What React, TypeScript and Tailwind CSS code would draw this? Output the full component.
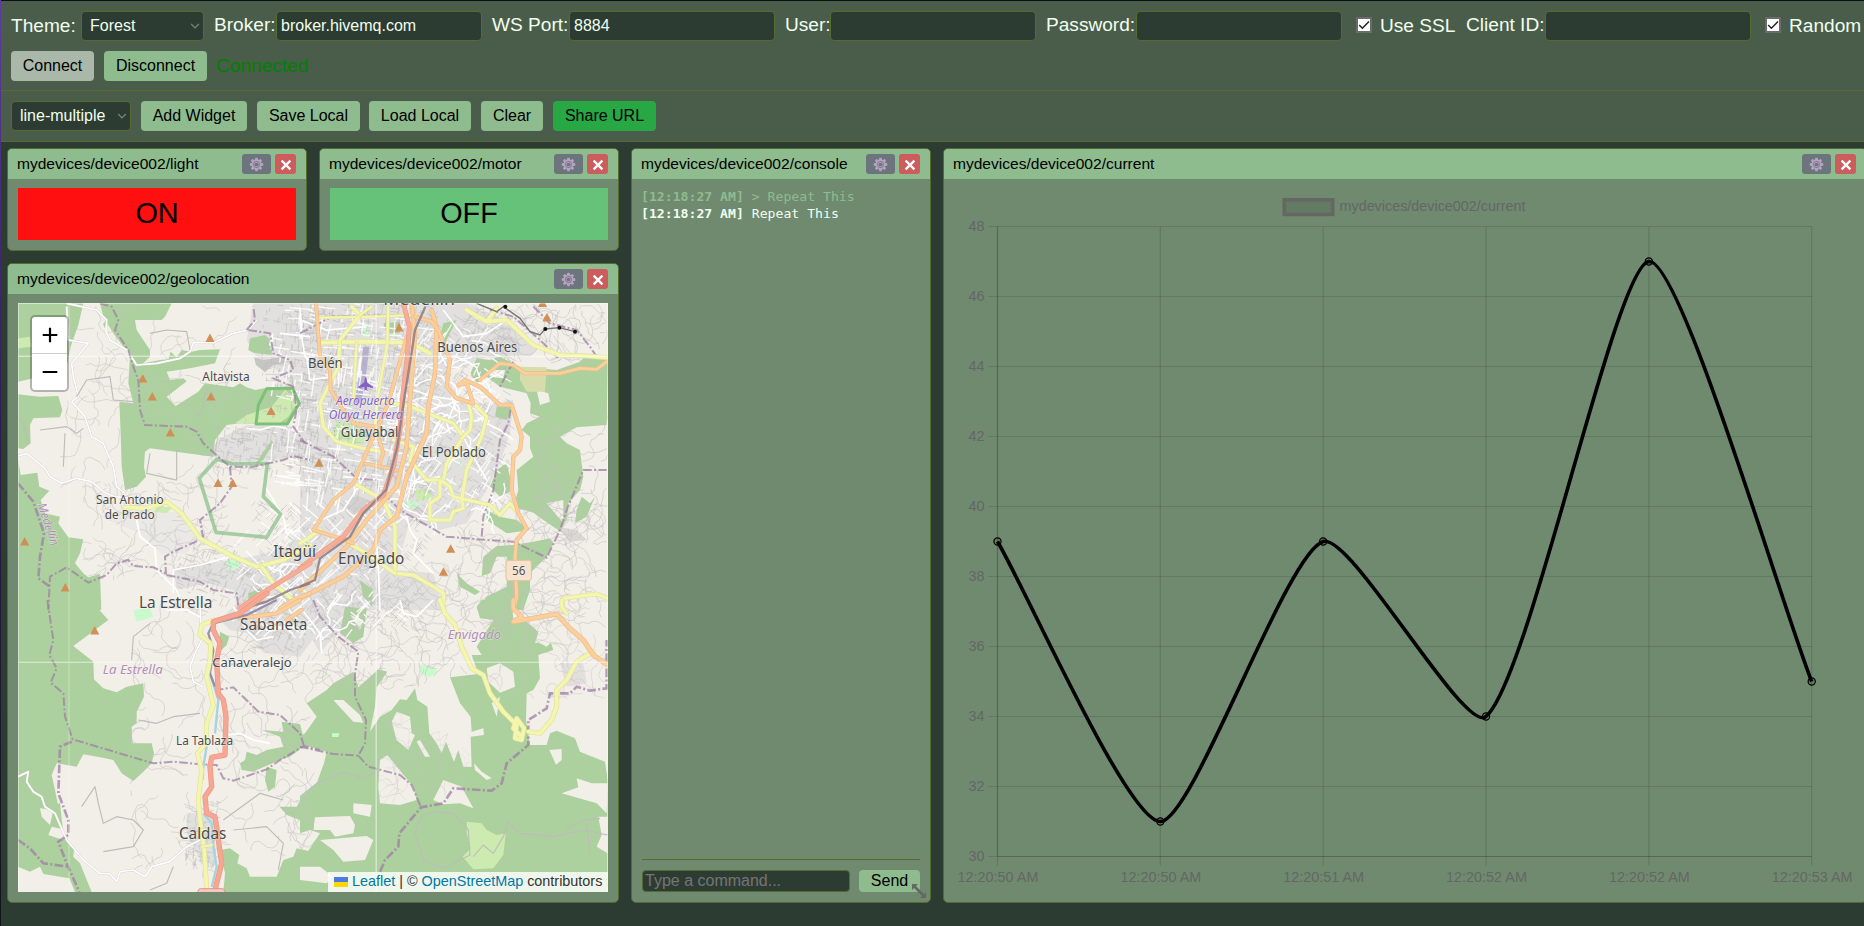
import React from "react";

/* ---------- shared bits ---------- */

const Gear = () => (
  <svg viewBox="0 0 16 16" className="h-[15px] w-[15px]">
    {[0, 45, 90, 135].map((a) => (
      <rect key={a} x="6.4" y="0.7" width="3.2" height="14.6" rx="1.2" fill="#b3a3be" transform={`rotate(${a} 8 8)`} />
    ))}
    <circle cx="8" cy="8" r="5.3" fill="#b3a3be" />
    <circle cx="8" cy="8" r="3.1" fill="none" stroke="#857b93" strokeWidth="1.1" />
    <circle cx="8" cy="8" r="1.9" fill="#6c757d" />
  </svg>
);

const Panel = ({ title, children, className = "" }: { title: string; children: React.ReactNode; className?: string }) => (
  <section className={`flex shrink-0 flex-col overflow-hidden rounded-[5px] border border-[#556b2f] bg-[#6f8a6f] ${className}`}>
    <header className="flex h-[30px] shrink-0 items-center bg-[#8fbc8f] pl-[9px] pr-[10px] text-[15.55px] text-black">
      <span className="min-w-0 flex-1 whitespace-nowrap pb-px leading-[28px]">{title}</span>
      <span className="flex h-[20px] w-[29px] items-center justify-center rounded-[3px] bg-[#6c757d]">
        <Gear />
      </span>
      <span className="ml-1 flex h-[20px] w-[21px] items-center justify-center rounded-[3px] bg-[#cd5c5c]">
        <svg viewBox="0 0 12 12" className="mt-[1px] h-[12px] w-[12px]">
          <path d="M1.6 1.6L10.4 10.4M10.4 1.6L1.6 10.4" stroke="#fff" strokeWidth="2.3" />
        </svg>
      </span>
    </header>
    <div className="flex min-h-0 flex-1 flex-col px-[10px] pb-[10px] pt-[9px]">{children}</div>
  </section>
);

const Field = ({ label, value = "", w }: { label: string; value?: string; w: string }) => (
  <div className="mr-[10px] flex shrink-0 items-center">
    <span className={`shrink-0 whitespace-nowrap leading-[28px] -mt-[2px] ${w}`}>{label}</span>
    <span className="flex h-[30px] w-[206px] items-center rounded-[4px] border border-[#556b2f] bg-[#2d3c32] px-[4px] text-[16px] text-[#f0fff0]">
      {value}
    </span>
  </div>
);

const Check = ({ label, className = "" }: { label: string; className?: string }) => (
  <div className={`flex shrink-0 items-center ${className}`}>
    <span className="flex h-[16px] w-[16px] shrink-0 items-center justify-center border-2 border-[#6b6b6b] bg-white -mt-[2px]">
      <svg viewBox="0 0 12 12" className="h-[12px] w-[12px]">
        <path d="M1.2 6L4.4 9.2L11 2.4" fill="none" stroke="#222" strokeWidth="1.5" />
      </svg>
    </span>
    <span className="ml-[8px] whitespace-nowrap leading-[30px]">{label}</span>
  </div>
);

const Select = ({ value, className }: { value: string; className: string }) => (
  <div className={`flex h-[30px] shrink-0 items-center justify-between rounded-[4px] border border-[#556b2f] bg-[#2d3c32] pl-[8px] pr-[3px] text-[16px] text-[#f0fff0] ${className}`}>
    <span>{value}</span>
    <svg viewBox="0 0 10 10" className="h-[10px] w-[10px]">
      <path d="M1.2 3L5 7L8.8 3" fill="none" stroke="#7a857c" strokeWidth="1.2" />
    </svg>
  </div>
);

const Btn = ({ label, className }: { label: string; className: string }) => (
  <button className={`flex h-[30px] shrink-0 items-center justify-center rounded-[4px] pb-[1px] text-[16px] text-black ${className}`}>{label}</button>
);

/* ---------- map ---------- */

const rng = (seed: number) => {
  let s = seed;
  return () => {
    s = (s * 1664525 + 1013904223) % 4294967296;
    return s / 4294967296;
  };
};

// Winding minor roads inside a rectangle
const wander = (seed: number, n: number, x: number, y: number, w: number, h: number, len = 9, step = 5) => {
  const r = rng(seed);
  let d = "";
  for (let i = 0; i < n; i++) {
    let px = x + r() * w;
    let py = y + r() * h;
    let a = r() * 6.28;
    d += `M${px.toFixed(1)} ${py.toFixed(1)}`;
    for (let k = 0; k < len; k++) {
      a += (r() - 0.5) * 1.9;
      px += Math.cos(a) * step;
      py += Math.sin(a) * step;
      if (px < x || px > x + w || py < y || py > y + h) break;
      d += `L${px.toFixed(1)} ${py.toFixed(1)}`;
    }
  }
  return d;
};

// Short perpendicular street segments
const grid = (seed: number, n: number, x: number, y: number, w: number, h: number, tilt: number, max = 16) => {
  const r = rng(seed);
  let d = "";
  for (let i = 0; i < n; i++) {
    const px = x + r() * w;
    const py = y + r() * h;
    const a = tilt + (r() > 0.5 ? Math.PI / 2 : 0) + (r() - 0.5) * 0.25;
    const l = 3 + r() * max;
    d += `M${px.toFixed(1)} ${py.toFixed(1)}l${(Math.cos(a) * l).toFixed(1)} ${(Math.sin(a) * l).toFixed(1)}`;
  }
  return d;
};

const Q1 = "translate(0 300) scale(0.33333)";
const Q2 = "translate(300 290) scale(0.33333)";
const Q3 = "translate(0 600) scale(0.33333)";
const Q4 = "translate(300 600) scale(0.33333)";

const Road = ({ d, c, k, w = 11 }: { d: string; c: string; k: string; w?: number }) => (
  <g fill="none" strokeLinejoin="round" strokeLinecap="round">
    <path d={d} stroke={k} strokeWidth={w + 2} />
    <path d={d} stroke={c} strokeWidth={w - 2} />
  </g>
);

const Orange = ({ d, w = 11 }: { d: string; w?: number }) => <Road d={d} c="#fbcf9c" k="#eebb88" w={w} />;
const Yellow = ({ d, w = 11 }: { d: string; w?: number }) => <Road d={d} c="#f4f6ae" k="#e0e2a0" w={w} />;

const Label = ({ x, y, w, s, children, fill = "#4a4a4a", italic = false }: { x: number; y: number; w: number; s: number; children: string; fill?: string; italic?: boolean }) => (
  <text x={x} y={y} textLength={w} lengthAdjust="spacingAndGlyphs" fontSize={s * 1.07} fill={fill} stroke="#ffffff" strokeOpacity="0.65" strokeWidth="2.4" paintOrder="stroke" fontStyle={italic ? "italic" : "normal"} className="font-['Noto_Sans',sans-serif]">
    {children}
  </text>
);

const peaks: [number, number][] = [
  [210, 338], [142.7, 378.5], [152.3, 396.5], [211, 396.5], [271, 411], [170.3, 432.5], [218, 483], [232.7, 483], [24.7, 541.5], [65.3, 587.5], [94.7, 630.5],
  [399, 327.5], [547, 317.5], [542.5, 303], [319, 462.7], [450.7, 548.7], [443.5, 571.7],
];

const CityMap = () => (
  <svg viewBox="18 303 590 589" className="block h-full w-full">
    <rect x="18" y="303" width="590" height="589" fill="#f2efe9" />

    {/* built-up areas */}
    <g fill="#e1e0de">
      <path transform={Q1} d="M760 10L930 10L930 430L890 380L905 310L870 250L820 200L780 190L740 120Z M650 420L740 375L900 380L930 470L700 490L640 470Z M800 760L930 700L930 930L720 930L700 870L620 850L530 870L520 810L600 790L700 780Z" />
      <path transform={Q1} d="M300 650L380 620L540 640L600 700L560 760L480 760L420 700Z" opacity=".4" />
      <path transform={Q2} d="M0 40L500 40L600 90L720 170L690 200L640 200L560 200L500 230L440 240L460 300L520 340L640 330L630 430L600 520L560 600L500 700L420 720L330 690L290 840L400 850L430 960L0 960Z" />
      <path transform={Q3} d="M720 0L960 0L960 90L900 170L800 160L740 100L690 90L660 60Z M560 640L640 640L650 800L600 780L560 700Z" />
      <path transform={Q4} d="M550 10L620 0L640 40L590 60L545 50Z M0 0L190 0L60 160L20 90Z M780 190L850 190L860 250L800 260Z" />
    </g>

    {/* woodland */}
    <g fill="#add19e">
      <path transform={Q1} d="M54 10L250 10L235 75L212 140L200 200L150 215L100 235L54 245Z M54 283L120 290L175 288L187 330L180 352L100 355L90 375L92 430L70 447L54 445Z M300 10L515 10L495 50L485 60L405 60L410 90L450 150L450 170L430 190L480 180L505 178L512 155L530 172L545 150L575 155L600 150L660 148L645 190L570 205L500 215L510 240L550 235L560 244L500 290L527 318L595 275L615 250L700 262L720 250L740 262L765 270L810 262L880 265L897 310L860 375L765 372L720 370L680 375L645 420L640 470L560 460L450 445L435 455L432 500L438 530L410 560L375 570L365 500L362 400L358 305L400 310L385 250L388 200L390 165L370 140L340 100L310 50Z M750 115L795 105L817 125L815 165L760 158L745 150Z M54 478L62 525L112 518L118 560L148 572L122 600L135 640L180 650L175 670L205 712L250 718L240 760L225 790L250 820L265 832L300 822L304 930L54 930Z M815 420L820 430L790 480L765 495L780 470Z M300 85L318 60L320 90Z M745 880L790 860L780 905L745 900Z" />
      <path transform={Q2} d="M925 200L860 195L840 215L770 240L660 230L600 200L570 210L530 205L512 250L530 280L560 260L600 290L640 300L680 310L692 340L690 370L720 380L680 400L665 420L690 440L690 475L700 500L650 540L655 600L640 650L700 668L730 690L780 724L800 690L805 640L840 600L850 560L840 480L800 460L780 440L830 412L920 405Z M885 620L860 680L825 700L830 660L845 620L870 640Z M430 100L470 90L450 130L430 170L420 140Z M250 100L300 95L300 130L260 130Z M590 350L640 350L620 390L585 380Z M590 540L620 520L640 600L600 620L570 590Z M470 850L500 880L540 905L525 915L480 890Z M640 765L700 755L750 745L760 760L740 800L690 850L690 900L670 960L530 960L560 920L620 890L620 800L590 800L570 850L545 858L550 800L590 768Z M180 870L220 900L215 950L190 920Z M560 660L600 680L650 690L690 720L620 730L560 690Z M740 640L790 630L790 700Z" />
      <path transform={Q3} d="M54 0L304 0L298 30L325 60L220 138L280 185L282 238L310 265L350 277L380 260L430 250L432 290L410 335L410 370L395 380L397 430L430 430L455 430L462 460L455 490L430 515L400 543L365 520L340 480L300 472L250 463L230 500L170 490L155 525L165 570L175 620L185 700L200 720L222 745L220 770L240 790L275 876L225 876L208 835L130 822L120 800L90 815L54 800Z M660 750L690 745L718 765L712 790L740 805L750 830L830 830L850 780L880 770L890 745L935 755L960 740L960 876L670 876L675 820Z M740 455L770 465L800 450L850 440L840 410L785 390L850 395L845 365L900 372L910 410L960 375L960 460L910 440L870 470L840 480L760 515L725 510L720 490L735 480Z M800 500L830 510L825 560L805 575L795 540Z M840 620L890 620L905 595L945 575L920 545L950 515L960 510L960 640L900 660L860 645Z M660 95L688 110L680 135L655 160Z M130 620L180 610L190 700L160 680Z" />
      <path transform={Q4} d="M0 410L15 400L50 350L20 310L80 270L100 250L160 215L175 262L235 208L262 215L230 262L225 320L210 395L240 350L275 330L300 298L320 300L345 265L352 300L382 320L388 400L410 430L425 460L438 425L462 485L475 450L490 500L515 500L512 410L552 405L550 385L515 395L512 350L480 310L450 232L535 222L515 165L545 165L530 140L580 60L540 55L530 20L545 0L635 0L640 60L680 65L715 95L705 130L750 120L760 150L715 165L720 235L700 270L680 280L678 360L690 435L740 435L750 400L770 392L825 415L840 455L915 485L923 540L923 876L0 876L0 790L60 700L30 690L0 700Z M135 20L200 25L190 110L160 130L120 100Z" />
    </g>

    {/* clearings */}
    <g fill="#f2efe9">
      <path transform={Q1} d="M250 30L300 50L330 120L380 165L385 220L340 260L230 300L215 200L235 120Z" />
      <path transform={Q2} d="M710 300L745 310L750 335L720 345Z M560 240L615 240L610 265L570 260Z" />
      <path transform={Q3} d="M120 625L160 630L150 675L125 650Z M155 680L200 690L190 720L145 705Z" />
      <path transform={Q4} d="M290 335L330 350L335 400L345 405L325 450L290 420L275 365Z M350 425L360 420L390 470L375 470Z M400 600L415 570L430 540L485 560L520 625L480 610L430 613Z M522 490L545 515L575 535L560 540L525 510Z M785 580L835 562L830 535L875 550L923 550L920 640L890 610Z M748 450L785 447L785 480L768 494Z M45 652L150 648L165 675L160 700L105 710L90 690L40 690Z M60 720L200 708L220 720L195 780L130 785L100 750Z M890 740L905 705L895 650L923 650L923 760Z M560 205L600 190L640 215L645 260L600 278L565 245Z M0 440L30 440L80 455L72 490L50 550L0 592Z M100 300L130 300L180 345L190 368L160 365Z M240 480L262 465L340 560L350 600L300 615L240 610L235 560Z M160 610L215 615L210 650L160 640Z M575 310L600 290L590 350Z M690 290L735 320L725 345L690 355Z M0 800L60 800L100 830L80 850L0 840Z M720 110L760 120L740 140L712 125Z M150 45L190 60L180 90Z" />
    </g>
    <g fill="#cdebb0">
      <path transform={Q1} d="M54 115L90 110L95 140L54 145Z M815 320L855 270L895 300L865 350L830 375L780 372L705 370L740 345Z" />
      <path transform={Q4} d="M500 665L545 670L560 690L590 705L617 700L610 765L580 805L520 808L488 770L512 745L500 700Z" />
      <path transform={Q2} d="M110 395L160 400L200 430L190 460L130 465L100 430Z M340 600L390 595L400 630L350 630Z" />
      <path transform={Q1} d="M470 620L520 620L500 640L460 635Z" />
    </g>
    <g fill="#c8facc">
      <path transform={Q4} d="M358 195L400 200L412 215L390 232L360 220Z M95 400L118 400L115 411L97 411Z" />
      <path transform={Q3} d="M400 30L450 25L460 50L410 65Z" />
      <path transform={Q1} d="M675 780L710 775L720 800L690 815Z" />
      <path transform={Q2} d="M315 630L360 640L350 655L320 650Z M470 515L490 520L480 530Z M188 110L205 115L205 140L188 140Z" />
    </g>
    <path transform={Q2} d="M660 230L740 232L735 305L680 305L660 270Z" fill="#d6dcac" />
    <g fill="#c6c5c3">
      <path transform={Q1} d="M762 172L790 180L850 170L858 190L820 195L795 217L768 195Z" />
      <path transform={Q2} d="M155 610L230 640L180 690L140 650Z M770 710L830 720L860 750L810 755Z" opacity=".55" />
      <path transform={Q2} d="M190 170L208 170L200 240L185 330L170 350L165 330L180 240Z" fill="#b5b0d2" />
    </g>

    {/* minor streets */}
    <g fill="none" strokeLinejoin="round">
      <g stroke="#c3c1c0" strokeWidth="0.7">
        <path d={wander(11, 60, 60, 305, 190, 185)} opacity=".75" />
        <path d={wander(12, 80, 80, 480, 150, 100)} opacity=".75" />
        <path d={wander(13, 55, 130, 600, 80, 270)} opacity=".8" />
        <path d={wander(14, 65, 215, 620, 100, 240)} opacity=".8" />
        <path d={wander(15, 110, 310, 560, 160, 130)} opacity=".8" />
        <path d={wander(16, 90, 455, 500, 153, 130)} opacity=".8" />
        <path d={wander(17, 45, 530, 400, 78, 150)} opacity=".8" />
        <path d={wander(18, 60, 480, 600, 128, 100)} opacity=".6" />
        <path d={wander(19, 25, 375, 730, 100, 60)} opacity=".25" />
        <path d={wander(20, 70, 460, 303, 148, 60)} opacity=".8" />
        <path d={wander(21, 40, 370, 710, 80, 100)} opacity=".4" />
      </g>
      <g stroke="#bcbbbb" strokeWidth="0.8">
        <path d={grid(31, 900, 300, 303, 130, 190, 0.15, 8)} opacity=".7" />
        <path d={grid(32, 500, 400, 310, 110, 200, 0.6, 8)} opacity=".7" />
        <path d={grid(33, 500, 255, 500, 170, 130, 0.75, 8)} opacity=".7" />
        <path d={grid(34, 200, 215, 425, 95, 45, 0.2, 6)} opacity=".7" />
        <path d={grid(35, 200, 240, 560, 60, 90, 0.5, 7)} opacity=".7" />
        <path d={grid(36, 120, 175, 540, 70, 70, 0.4, 7)} opacity=".7" />
        <path d={grid(37, 170, 262, 305, 48, 110, 0.1, 7)} opacity=".7" />
        <path d={grid(38, 110, 185, 800, 35, 70, 0.2, 6)} opacity=".6" />
      </g>
      <g stroke="#ffffff" strokeWidth="1.4">
        <path d={grid(41, 240, 270, 303, 150, 190, 0.15, 22)} opacity=".85" />
        <path d={grid(42, 110, 410, 315, 90, 190, 0.55, 20)} opacity=".8" />
        <path d={grid(43, 130, 240, 500, 160, 130, 0.75, 22)} opacity=".85" />
        <path d={wander(44, 24, 385, 330, 120, 210, 12, 6)} />
        <path d={wander(45, 16, 250, 560, 110, 80, 10, 6)} />
      </g>
      <g stroke="#cfcccb" strokeWidth="7">
        <path transform={Q1} d="M54 468L80 460L110 485L135 505L150 530L185 550L230 535L275 545L310 575L345 590L395 595M200 10L245 20L290 30L320 60L318 95L330 120L380 150L410 195L470 190L540 175L570 155L580 128L640 128L700 100L745 90L770 60M200 20L205 120L265 130L215 190L220 230L235 290L215 305L255 350L275 410L310 430L340 500L350 560L375 580" />
        <path transform={Q3} d="M54 530L85 515L80 545L100 575L125 590L135 620L165 640L200 720L250 780L300 820L330 822L350 845L360 815L400 810L435 830L455 800L510 785L560 740L600 720M600 20L605 120L585 160L570 200L580 245L610 260" />
      </g>
      <g stroke="#ffffff" strokeWidth="5">
        <path transform={Q1} d="M54 468L80 460L110 485L135 505L150 530L185 550L230 535L275 545L310 575L345 590L395 595M200 10L245 20L290 30L320 60L318 95L330 120L380 150L410 195L470 190L540 175L570 155L580 128L640 128L700 100L745 90L770 60M200 20L205 120L265 130L215 190L220 230L235 290L215 305L255 350L275 410L310 430L340 500L350 560L375 580M410 660L420 710L465 745L470 810L530 870L540 900M740 385L780 390L820 378L860 385M795 560L820 600L850 650L860 700L900 690M520 880L520 810L600 795L690 770M900 20L905 110L915 170L930 180M840 100L930 110" />
        <path transform={Q3} d="M54 530L85 515L80 545L100 575L125 590L135 620L165 640L200 720L250 780L300 820L330 822L350 845L360 815L400 810L435 830L455 800L510 785L560 740L600 720M600 20L605 120L585 160L570 200L580 245L610 260M700 20L740 90L770 120L820 110M500 30L560 30L600 50M680 405L720 400L760 420L810 430" />
        <path transform={Q2} d="M0 90L80 120L200 110M20 200L30 270L100 260M340 300L400 320L470 330L440 400L450 430M480 420L520 500L560 570M370 550L340 580L420 560M320 680L330 720L350 750L340 790L380 830L400 850M200 550L130 660L40 700M230 760L235 830L240 960M130 560L250 570M560 400L600 420L640 450M430 60L490 140L560 130L620 90" />
        <path transform={Q4} d="M300 0L310 40L350 50L380 20L400 0M0 20L60 100L65 160" />
      </g>
      <g stroke="#bdbcba" strokeWidth="3.4">
        <path transform={Q1} d="M450 100L500 90L560 95L570 150M120 390L200 380L230 400L250 385M190 500L195 400M450 460L440 520L530 540L530 450M230 290L260 240L330 230L340 300L400 305M54 355L70 370L85 430M620 265L605 340L585 348" />
        <path transform={Q3} d="M245 620L285 560L295 610L310 670L350 650L400 660L430 690L400 740L310 755M395 180L400 110L450 70M415 360L470 370L520 350L600 340M670 660L780 580L850 600M700 690L800 680L850 730L835 810M450 870L500 850L520 800" />
        <path transform={Q4} d="M0 590L50 550L130 517L190 535L235 510M365 640L345 700L370 780L430 805L510 765L505 690L460 640L400 635L365 650M520 770L550 735L580 760L610 710L625 665L660 700L760 710L850 690L923 705M795 690L850 660L900 655M860 670L870 760" />
      </g>
    </g>

    {/* protected area outlines */}
    <g fill="none" stroke="#8cc08a" strokeLinejoin="round">
      <path transform={Q1} d="M650 478L700 492L802 490L790 590L842 642L800 712L648 697L598 535Z" strokeWidth="11" opacity=".75" />
      <path transform={Q1} d="M768 372L775 315L800 266L878 264L898 310L862 372Z" strokeWidth="9" stroke="#7fbf7a" />
      <path transform={Q2} d="M105 460L103 415L130 385L190 400" strokeWidth="3" strokeDasharray="5 6" />
    </g>

    {/* administrative boundaries */}
    <g fill="none" stroke="#9f7fa3" strokeOpacity=".75" strokeWidth="6" strokeDasharray="26 7 6 7">
      <path transform={Q1} d="M300 10L335 20L355 60L345 90L385 150L400 200L415 240L420 330L435 375L560 380L590 395L610 430L660 475L690 500L760 500L850 480L880 468L930 480M690 500L695 560L660 610L600 660L610 715L520 755L495 770L498 820L460 802L400 798L385 780L350 790L320 825L265 848L200 802L150 830L145 930M500 825L600 845L640 870L710 880L715 920M740 90L765 60L760 20M745 90L810 100L820 160L870 180L880 210L820 235L880 260L890 330L880 380L915 430" />
      <path transform={Q1} d="M54 550L100 605L132 700L120 770L115 835L150 860" strokeWidth="8" />
      <path transform={Q3} d="M142 0L160 120L148 165L170 205L152 248L190 280L195 350L218 418L460 490L520 485L600 493L650 495L670 535L700 542L800 508L840 480L912 438L960 450M912 438L900 400L840 345L775 335L700 262L650 270" />
      <path transform={Q3} d="M215 425L180 440L175 580L205 660L205 705L175 725L200 790L238 876M54 720L90 745L130 790L205 800" strokeWidth="8" />
      <path transform={Q4} d="M0 440L100 462L175 467L195 430L198 360L165 290L165 220L175 155L115 110L60 50L40 0M175 467L205 500L300 525L335 555L363 622" />
      <path transform={Q4} d="M240 815L255 780L295 740L298 700L363 622L430 610L460 565L575 572L605 550L620 490L685 435L685 360L740 325L750 280L810 280L830 260L870 272L920 265L920 120" strokeWidth="8" />
      <path transform={Q2} d="M0 450L30 465L100 500L170 565L230 570M250 610L300 660L440 740L560 750L640 755L740 803L780 720L800 660L850 540L920 540M545 740L550 680L580 600L600 450L625 400L635 340M570 60L640 80L720 150L780 210M640 215L600 290M700 50L750 100L830 120L870 170L890 200M0 130L100 78L330 75" />
    </g>

    {/* rivers */}
    <g transform={Q3} fill="none" stroke="#a6d4dc" strokeWidth="7">
      <path d="M630 220L655 300L645 400M620 440L610 500L608 540M610 640L635 670L640 740L650 800L635 860" />
    </g>

    {/* main roads */}
    <g transform={Q2}>
      <Yellow d="M55 83L210 80L350 75" w={8} />
      <Yellow d="M60 158L190 155L330 158L390 190" w={13} />
      <Yellow d="M155 50L180 75L120 150L115 230L60 340L70 410L110 455L190 475L250 485" />
      <Yellow d="M265 50L262 160L235 310L225 400" w={9} />
      <Yellow d="M180 75L215 50M170 150L160 330" w={8} />
      <Yellow d="M230 330L330 350L460 400L490 440L440 520L430 570L380 570L330 510L340 470L280 450" />
      <Yellow d="M505 340L515 380L510 420L485 445M525 345L560 380L545 440L500 540L485 630L490 655L460 665L450 690L390 690L390 640L420 620L420 570L450 590L460 620L570 645L600 675L630 640L650 665" />
      <Yellow d="M500 60L560 95L620 90L700 165L780 195L860 198L923 203M560 95L590 55" w={13} />
      <Yellow d="M170 585L250 630L285 710L285 850L340 855L400 890L430 910L432 960M60 720L0 760" w={12} />
      <Yellow d="M120 745L200 790L285 850" w={12} />
      <Yellow d="M923 925L890 912L790 925L785 960" w={12} />
      <Orange d="M48 40L60 200L90 240L92 300L130 360L160 400L225 410L250 490L235 530" w={10} />
      <Orange d="M395 60L410 110L405 250L385 350L380 430L320 560L290 680L240 720L220 780L130 860L0 925" w={12} />
      <Orange d="M335 40L345 130L330 330L320 470L290 590L200 690L140 770L0 900" w={12} />
      <Orange d="M320 140L290 250L265 340L220 440L160 580L100 630L40 720L120 745L160 760" w={10} />
      <Orange d="M345 80L395 95L415 120L450 210L440 290L470 325L520 340L500 280L475 285L495 270L540 290L600 345L635 345L665 440L660 480L640 500L635 600L655 670L680 715L650 750L645 800L650 920L640 960" w={11} />
      <Orange d="M540 270L600 220L640 225L675 250L780 250L840 235L890 238L920 215" w={10} />
      <Orange d="M195 520L290 540" w={9} />
      <Road d="M310 40L328 110L322 200L310 300L300 420L280 530L250 615L190 660L130 740L60 790L0 835" c="#f6ad98" k="#ee9c86" w={13} />
      <path d="M376 50L345 120L333 200L312 330L292 470L258 600L190 670L150 740L60 805L45 870L0 890" fill="none" stroke="#8b7d84" strokeWidth="7" opacity=".85" />
      <path d="M530 40L590 65L610 50L660 85L690 125L720 135L735 117L778 113L825 125" fill="none" stroke="#777" strokeWidth="4" />
      {[[616, 50], [736, 117], [778, 113], [825, 125]].map(([x, y]) => (
        <circle key={x} cx={x} cy={y} r="6" fill="#111" />
      ))}
    </g>
    <g transform={Q1}>
      <Yellow d="M375 622L440 625L500 605L545 640L600 715L700 770L770 800L850 780L930 735" w={13} />
      <Yellow d="M785 800L820 850L880 900" w={12} />
      <Road d="M930 790L850 840L770 890L720 925" c="#f6ad98" k="#ee9c86" w={13} />
      <path d="M930 850L870 870L800 905L740 922" fill="none" stroke="#8b7d84" strokeWidth="7" opacity=".85" />
      <Orange d="M930 880L880 900L840 925" />
    </g>
    <g transform={Q3}>
      <Orange d="M720 55L830 40L900 0M860 60L905 30" />
      <path d="M830 0L740 45L640 70L625 100L640 150L630 220L645 260" fill="none" stroke="#8b83a0" strokeWidth="7" opacity=".85" />
      <Yellow d="M640 60L605 75L600 105L632 130L630 180L620 230L640 315L620 370L618 430L592 460L605 510L595 600L600 660L612 740L620 865" w={13} />
      <Yellow d="M600 690L630 690M605 740L635 735" w={8} />
      <Road d="M800 -20L720 40L640 65L640 90L660 130L650 180L655 280L670 300L678 350L675 465L635 472L630 500L635 560L615 590L620 640L645 650L655 720L665 790L645 870" c="#f6a794" k="#ee9681" w={14} />
      <rect x="594" y="866" width="80" height="30" rx="8" fill="#f6c9c2" stroke="#e0968b" strokeWidth="3" />
    </g>
    <g transform={Q4}>
      <Yellow d="M420 0L435 40L465 75L485 140L515 205L550 225L570 280L610 335L650 375L645 415L665 420L672 385L650 355L640 385L665 410M685 395L720 400L755 360L770 320L770 270L800 240L830 185L880 155" w={13} />
      <Yellow d="M785 0L785 20L800 40" w={11} />
      <Orange d="M640 0L640 25L665 50L640 65L700 55L770 42L810 85L850 120L880 165L923 195" w={13} />
    </g>

    {/* summits */}
    {peaks.map(([x, y]) => (
      <path key={`${x}-${y}`} d={`M${x} ${y - 4.4}L${x + 4.6} ${y + 4}H${x - 4.6}Z`} fill="#d08f55" />
    ))}
    <path transform={Q2} d="M197 260Q202 266 201 277L219 290V295L201 290L200 298L205 303L197 300L189 303L194 298L193 290L175 295V290L193 277Q192 266 197 260Z" fill="#8461c4" />
    <g transform={Q2}>
      <rect x="618" y="811" width="76" height="61" rx="8" fill="#f6e2cd" stroke="#e5c19a" strokeWidth="3" />
      <Label x={636} y={855} w={40} s={34}>56</Label>
    </g>

    {/* tile seams */}
    <g fill="#ffffff" opacity=".5">
      <rect x="18" y="355.6" width="590" height="1.4" />
      <rect x="18" y="661.7" width="590" height="1.2" />
      <rect x="375.5" y="303" width="1.4" height="589" />
      <rect x="68.5" y="303" width="1" height="589" opacity=".7" />
      <rect x="18" y="303" width="590" height="0.8" />
      <rect x="18" y="303" width="0.8" height="589" />
      <rect x="607.2" y="303" width="0.8" height="589" />
    </g>

    {/* place names */}
    <g transform={Q2}>
      <Label x={250} y={46} w={215} s={48}>Medellín</Label>
      <Label x={24} y={233} w={104} s={38}>Belén</Label>
      <Label x={412} y={187} w={240} s={38}>Buenos Aires</Label>
      <Label x={108} y={344} w={176} s={36} fill="#8461c4" italic>Aeropuerto</Label>
      <Label x={86} y={386} w={222} s={36} fill="#8461c4" italic>Olaya Herrera</Label>
      <Label x={122} y={442} w={173} s={38}>Guayabal</Label>
      <Label x={365} y={500} w={193} s={38}>El Poblado</Label>
      <Label x={114} y={823} w={199} s={44}>Envigado</Label>
    </g>
    <g transform={Q1}>
      <Label x={607} y={242} w={142} s={35}>Altavista</Label>
      <Label x={288} y={611} w={203} s={34}>San Antonio</Label>
      <Label x={314} y={657} w={150} s={34}>de Prado</Label>
      <Label x={820} y={770} w={128} s={44}>Itagüí</Label>
      <Label x={417} y={924} w={220} s={44}>La Estrella</Label>
      <g transform="rotate(72 118 612)">
        <Label x={118} y={618} w={132} s={34} fill="#b08db5" italic>Medellín</Label>
      </g>
    </g>
    <g transform={Q3}>
      <Label x={720} y={90} w={202} s={44}>Sabaneta</Label>
      <Label x={637} y={201} w={238} s={37}>Cañaveralejo</Label>
      <Label x={308} y={222} w={180} s={36} fill="#b08db5" italic>La Estrella</Label>
      <Label x={528} y={436} w={171} s={34}>La Tablaza</Label>
      <Label x={537} y={718} w={142} s={44}>Caldas</Label>
    </g>
    <g transform={Q4}>
      <Label x={443} y={117} w={160} s={36} fill="#b08db5" italic>Envigado</Label>
    </g>
  </svg>
);

/* ---------- chart ---------- */

const values = [39, 31, 39, 34, 47, 35];
const times = ["12:20:50 AM", "12:20:50 AM", "12:20:51 AM", "12:20:52 AM", "12:20:52 AM", "12:20:53 AM"];
const X = (i: number) => 997.5 + i * 162.84;
const Y = (v: number) => 226.5 + (48 - v) * 35;

const TENSION = 0.2;

// Cardinal-style spline: control points follow the chord between both neighbours
const curve = () => {
  const pts = values.map((v, i) => [X(i), Y(v)]);
  const ctl = pts.map((p, i) => {
    const a = pts[Math.max(i - 1, 0)];
    const b = pts[Math.min(i + 1, pts.length - 1)];
    const d0 = Math.hypot(p[0] - a[0], p[1] - a[1]);
    const d1 = Math.hypot(b[0] - p[0], b[1] - p[1]);
    const f0 = (TENSION * d0) / (d0 + d1);
    const f1 = (TENSION * d1) / (d0 + d1);
    const vx = b[0] - a[0];
    const vy = b[1] - a[1];
    return [p[0] - f0 * vx, p[1] - f0 * vy, p[0] + f1 * vx, p[1] + f1 * vy];
  });
  let d = `M${pts[0][0]} ${pts[0][1]}`;
  for (let i = 0; i < pts.length - 1; i++) {
    d += `C${ctl[i][2]} ${ctl[i][3]} ${ctl[i + 1][0]} ${ctl[i + 1][1]} ${pts[i + 1][0]} ${pts[i + 1][1]}`;
  }
  return d;
};

const Chart = () => (
  <svg viewBox="954 188 902 704" className="block h-[704px] w-[902px] overflow-visible font-['Liberation_Sans',Arial,sans-serif]" fontSize="14.4" fill="#666666">
    <rect x="1284.3" y="199.8" width="48.4" height="14.6" fill="#000" fillOpacity=".1" stroke="#666" strokeWidth="3.6" />
    <text x="1339.5" y="211" textLength="186" lengthAdjust="spacingAndGlyphs">mydevices/device002/current</text>
    <g stroke="#000" strokeOpacity=".12" strokeWidth="1.2">
      {[48, 46, 44, 42, 40, 38, 36, 34, 32, 30].map((v) => (
        <line key={v} x1="988.4" x2={X(5)} y1={Y(v)} y2={Y(v)} />
      ))}
      {times.map((_, i) => (
        <line key={i} x1={X(i)} x2={X(i)} y1="226.5" y2="865.8" />
      ))}
      <path d={`M${X(0)} 226.5V856.5H${X(5)}`} fill="none" />
    </g>
    {[48, 46, 44, 42, 40, 38, 36, 34, 32, 30].map((v) => (
      <text key={v} x="984.5" y={Y(v) + 4} textAnchor="end">{v}</text>
    ))}
    {times.map((t, i) => (
      <text key={i} x={X(i) + 0.5} y="882.3" textAnchor="middle">{t}</text>
    ))}
    <path d={curve()} fill="none" stroke="#000" strokeWidth="3.6" />
    {values.map((v, i) => (
      <circle key={i} cx={X(i)} cy={Y(v)} r="3.6" fill="#000" fillOpacity=".1" stroke="#000" strokeWidth="1.2" />
    ))}
  </svg>
);

/* ---------- page ---------- */

export default function App() {
  return (
    <div className="flex h-[926px] w-[1864px] overflow-hidden bg-[#2d3c32] font-['Liberation_Sans',Arial,sans-serif] text-[19.1px] text-[#f0fff0]">
      <div className="w-px shrink-0 bg-linear-to-b from-[#5a3ea0] via-[#2a1a4a] to-[#101418]" />
      <div className="flex w-[1863px] flex-col overflow-hidden border-t border-[#0b0f14]">
        <div className="flex h-[90px] shrink-0 flex-col gap-[10px] border-b border-[#556b2f] bg-[#4a5d4b] px-[10px] pt-[10px]">
          <div className="flex h-[30px] items-center">
            <span className="w-[70px] shrink-0 leading-[30px]">Theme:</span>
            <Select value="Forest" className="mr-[10px] w-[123px]" />
            <Field label="Broker:" value="broker.hivemq.com" w="w-[62px]" />
            <Field label="WS Port:" value="8884" w="w-[77px]" />
            <Field label="User:" w="w-[45px]" />
            <Field label="Password:" w="w-[90px]" />
            <Check label="Use SSL" className="ml-[4px] w-[110px]" />
            <Field label="Client ID:" w="w-[79px]" />
            <Check label="Random" className="ml-[4px]" />
          </div>
          <div className="flex h-[30px] items-center gap-[10px]">
            <Btn label="Connect" className="w-[83px] bg-[#a9b8a9]" />
            <Btn label="Disconnect" className="w-[103px] bg-[#8fbc8f]" />
            <span className="-ml-px leading-[30px] text-[#008000]">Connected</span>
          </div>
        </div>
        <div className="flex h-[51px] shrink-0 items-center gap-[10px] border-b border-[#556b2f] bg-[#4a5d4b] px-[10px]">
          <Select value="line-multiple" className="w-[120px]" />
          <Btn label="Add Widget" className="w-[106px] bg-[#8fbc8f]" />
          <Btn label="Save Local" className="w-[103px] bg-[#8fbc8f]" />
          <Btn label="Load Local" className="-ml-px w-[102px] bg-[#8fbc8f]" />
          <Btn label="Clear" className="w-[62px] bg-[#8fbc8f]" />
          <Btn label="Share URL" className="w-[103px] bg-[#28a745]" />
        </div>

        <main className="flex gap-[12px] pl-[6px] pt-[6px]">
          <div className="flex shrink-0 flex-col gap-[12px]">
            <div className="flex gap-[12px]">
              <Panel title="mydevices/device002/light" className="h-[103px] w-[300px]">
                <div className="flex h-[52px] items-center justify-center bg-[#ff0f0f] text-[28.8px] text-black">ON</div>
              </Panel>
              <Panel title="mydevices/device002/motor" className="h-[103px] w-[300px]">
                <div className="flex h-[52px] items-center justify-center bg-[#67c279] text-[28.8px] text-black">OFF</div>
              </Panel>
            </div>
            <Panel title="mydevices/device002/geolocation" className="h-[640px] w-[612px]">
              <div className="relative h-[589px] w-[590px] overflow-hidden">
                <CityMap />
                <div className="absolute left-[12px] top-[12px] flex w-[39px] flex-col rounded-[5px] border-2 border-[#00000040] bg-white bg-clip-padding text-black">
                  <span className="flex h-[37px] items-center justify-center border-b border-[#ccc]">
                    <svg viewBox="0 0 16 16" className="h-[16px] w-[16px]"><path d="M0.7 8H15.3M8 0.7V15.3" stroke="#000" strokeWidth="2.2" /></svg>
                  </span>
                  <span className="flex h-[36px] items-center justify-center">
                    <svg viewBox="0 0 16 16" className="h-[16px] w-[16px]"><path d="M0.7 8H15.3" stroke="#000" strokeWidth="2.2" /></svg>
                  </span>
                </div>
                <div className="absolute bottom-0 right-0 flex h-[20px] w-[280px] items-center whitespace-nowrap bg-[#ffffffcc] pl-[6px] text-[14.4px] text-[#333]">
                  <svg viewBox="0 0 14 10" className="mr-[4px] h-[10px] w-[14px] shrink-0">
                    <rect width="14" height="5" fill="#4c7be1" />
                    <rect y="5" width="14" height="5" fill="#ffd500" />
                  </svg>
                  <span className="text-[#0078a8]">Leaflet</span>
                  <span className="mx-[4px]">|</span>
                  <span className="mr-[4px]">©</span>
                  <span className="text-[#0078a8]">OpenStreetMap</span>
                  <span className="ml-[4px]">contributors</span>
                </div>
              </div>
            </Panel>
          </div>

          <Panel title="mydevices/device002/console" className="relative h-[755px] w-[300px]">
            <div className="-ml-px flex flex-1 flex-col font-['DejaVu_Sans_Mono','Liberation_Mono',monospace] text-[13.15px] leading-[17px]">
              <div className="whitespace-pre text-[#8fbc8f]"><b>[12:18:27 AM]</b>{" > Repeat This"}</div>
              <div className="whitespace-pre"><b>[12:18:27 AM]</b>{" Repeat This"}</div>
            </div>
            <div className="flex gap-[9px] border-t border-[#556b2f] pt-[10px]">
              <span className="flex h-[22px] w-[208px] items-center rounded-[4px] border border-[#556b2f] bg-[#2d3c32] px-[2px] text-[16px] text-[#757575]">Type a command...</span>
              <span className="flex h-[22px] w-[61px] items-center justify-center rounded-[4px] bg-[#8fbc8f] text-[16px] text-black">Send</span>
            </div>
            <svg viewBox="0 0 14 14" className="absolute bottom-[4px] right-[4px] h-[14px] w-[14px]">
              <path d="M2 2L12 12" stroke="#666" strokeWidth="2.6" />
              <path d="M0 0H6L0 6ZM14 14H8L14 8Z" fill="#666" />
            </svg>
          </Panel>

          <Panel title="mydevices/device002/current" className="h-[755px] w-[924px]">
            <Chart />
          </Panel>
        </main>
      </div>
    </div>
  );
}
